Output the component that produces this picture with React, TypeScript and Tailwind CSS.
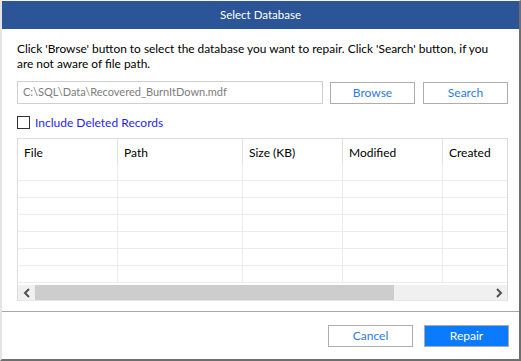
import React from "react";

const font = { fontFamily: 'Lato, "Open Sans", sans-serif' };

function Chevron({ dir }: { dir: "left" | "right" }) {
  return (
    <svg width="8" height="10" viewBox="0 0 8 10">
      {dir === "left" ? (
        <path d="M6 1 L2 5 L6 9" stroke="#505050" strokeWidth="2" fill="none" />
      ) : (
        <path d="M2 1 L6 5 L2 9" stroke="#505050" strokeWidth="2" fill="none" />
      )}
    </svg>
  );
}

export default function App() {
  const cols = [
    { name: "File", w: "w-[100px]" },
    { name: "Path", w: "w-[125px]" },
    { name: "Size (KB)", w: "w-[100px]" },
    { name: "Modified", w: "w-[100px]" },
    { name: "Created", w: "w-[100px]" },
  ];
  const rows = [0, 1, 2, 3, 4, 5, 6];
  return (
    <div
      className="w-[521px] h-[361px] bg-white flex flex-col border-t border-t-[#f4f4f4] border-l-2 border-l-[#e4e4e4] border-r-2 border-r-[#6e6e6e] border-b-2 border-b-[#6e6e6e] overflow-hidden text-[12px] text-black"
      style={font}
    >
      <div className="h-[28px] bg-[#2b5597] text-white text-[11.5px] flex items-center justify-center shrink-0">
        Select Database
      </div>
      <div className="pl-[15px] pr-[10px] flex flex-col">
        <p className="mt-[12px] leading-[15px] whitespace-nowrap text-[11.9px]">
          Click 'Browse' button to select the database you want to repair. Click 'Search' button, if you
          <br />
          are not aware of file path.
        </p>
        <div className="mt-[10px] flex items-center">
          <div className="w-[306px] h-[23px] border border-[#cfcfcf] flex items-center pl-[5px] text-[#7d7d7d] text-[11px]">
            C:\SQL\Data\Recovered_BurnItDown.mdf
          </div>
          <button className="ml-[7px] w-[85px] h-[22px] border border-[#adadad] text-[#2b7be8] bg-white flex items-center justify-center">
            Browse
          </button>
          <button className="ml-[8px] w-[85px] h-[22px] border border-[#adadad] text-[#2b7be8] bg-white flex items-center justify-center">
            Search
          </button>
        </div>
        <div className="mt-[12px] flex items-center h-[13px]">
          <div className="w-[13px] h-[13px] border border-[#333333] bg-white" />
          <span className="ml-[5px] text-[#1f1ff0]">Include Deleted Records</span>
        </div>
        <div className="mt-[9px] w-[491px] border-l border-r border-t border-[#dcdcdc] overflow-hidden">
          <div className="flex h-[25px]">
            {cols.map((c, i) => (
              <div
                key={c.name}
                className={`${c.w} shrink-0 flex items-center pl-[6px] pt-[2px] ${i < cols.length - 1 ? "border-r border-[#e2e2e2]" : ""}`}
              >
                {c.name}
              </div>
            ))}
          </div>
          <div className="h-[121px] overflow-hidden">
            {rows.map((r) => (
              <div key={r} className="flex h-[17px] border-b border-[#ececec]">
                {cols.map((c, i) => (
                  <div
                    key={c.name}
                    className={`${c.w} shrink-0 ${i < cols.length - 1 ? "border-r border-[#ececec]" : ""}`}
                  />
                ))}
              </div>
            ))}
          </div>
          <div className="h-[16px] bg-[#f0f0f0] flex items-stretch border-b border-[#e6e6e6]">
            <div className="w-[17px] flex items-center justify-center">
              <Chevron dir="left" />
            </div>
            <div className="w-[359px] bg-[#cdcdcd]" />
            <div className="flex-1 flex items-center justify-end pr-[4px]">
              <Chevron dir="right" />
            </div>
          </div>
        </div>
      </div>
      <div className="mt-[10px] h-px bg-[#a8a8a8]" />
      <div className="pr-[10px] mt-[13px] flex justify-end">
        <button className="w-[85px] h-[22px] border border-[#adadad] text-[#2b7be8] bg-white flex items-center justify-center">
          Cancel
        </button>
        <button className="ml-[11px] w-[85px] h-[22px] border border-[#a9a9a9] text-white bg-[#0a7bff] flex items-center justify-center">
          Repair
        </button>
      </div>
    </div>
  );
}
